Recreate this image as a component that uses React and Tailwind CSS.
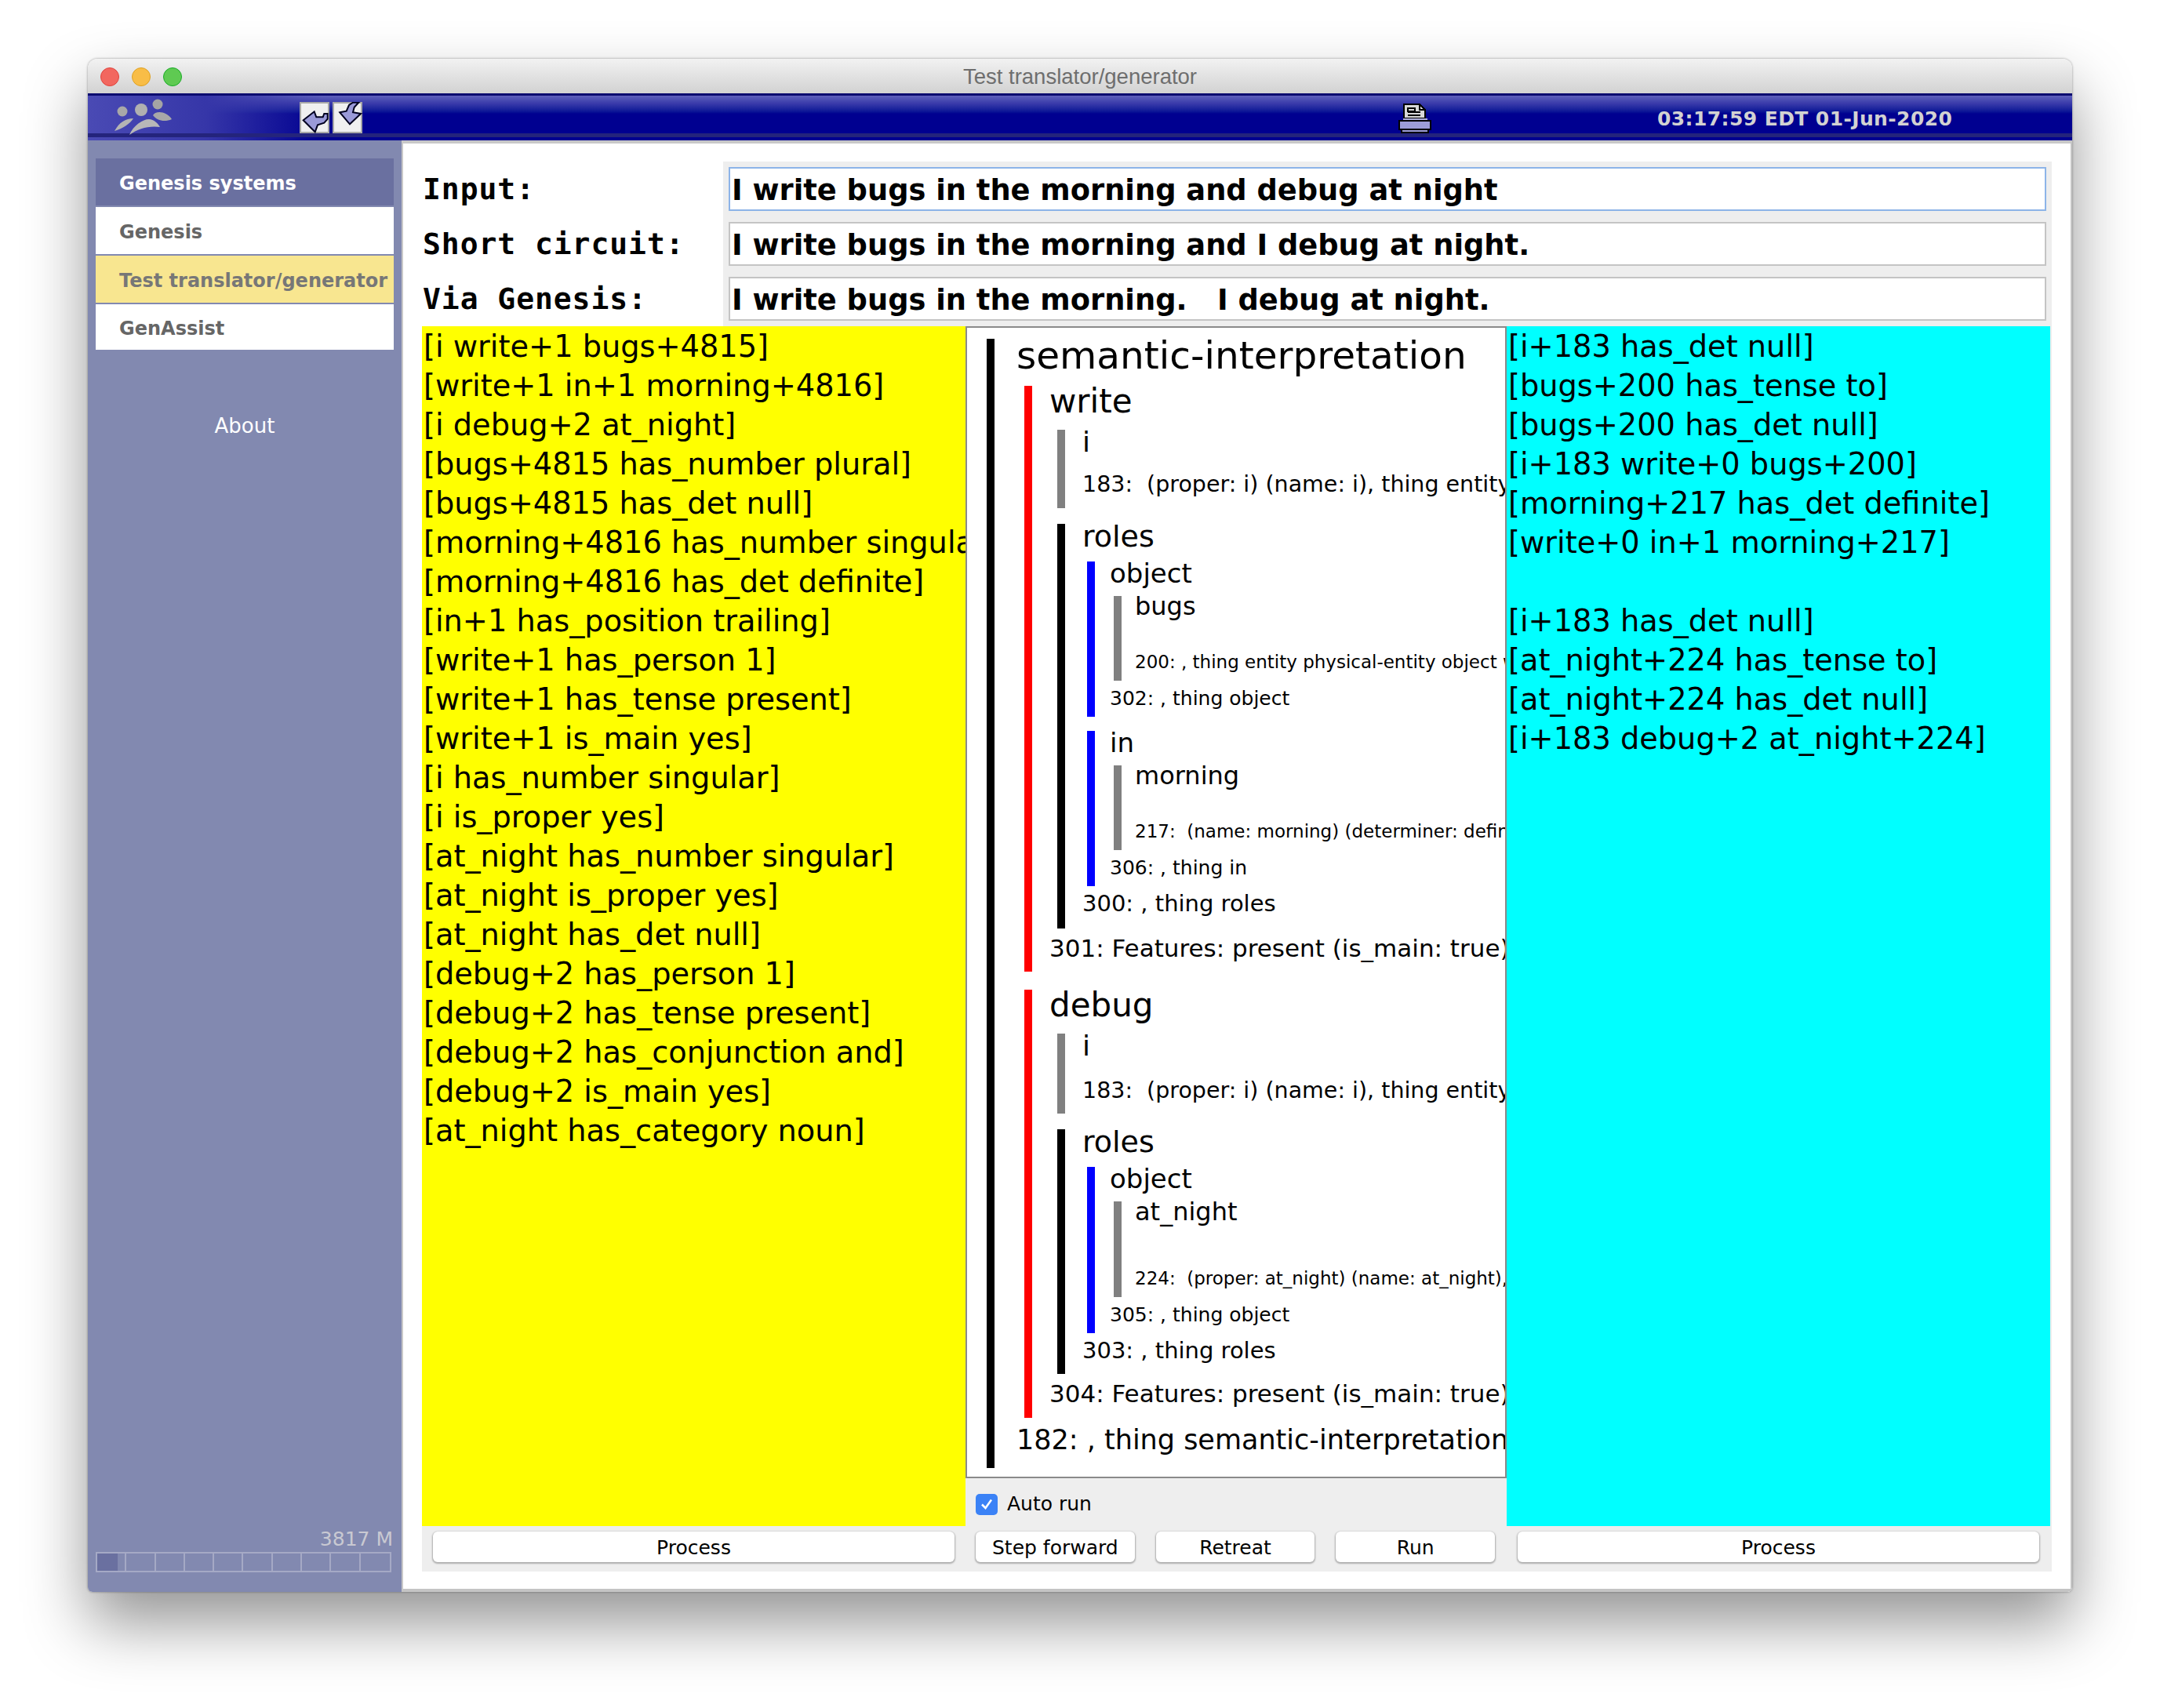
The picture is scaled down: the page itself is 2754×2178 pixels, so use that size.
const YELLOW_LINES = [
    '[i write+1 bugs+4815]',
    '[write+1 in+1 morning+4816]',
    '[i debug+2 at_night]',
    '[bugs+4815 has_number plural]',
    '[bugs+4815 has_det null]',
    '[morning+4816 has_number singular]',
    '[morning+4816 has_det definite]',
    '[in+1 has_position trailing]',
    '[write+1 has_person 1]',
    '[write+1 has_tense present]',
    '[write+1 is_main yes]',
    '[i has_number singular]',
    '[i is_proper yes]',
    '[at_night has_number singular]',
    '[at_night is_proper yes]',
    '[at_night has_det null]',
    '[debug+2 has_person 1]',
    '[debug+2 has_tense present]',
    '[debug+2 has_conjunction and]',
    '[debug+2 is_main yes]',
    '[at_night has_category noun]',
];

const CYAN_LINES = [
    '[i+183 has_det null]',
    '[bugs+200 has_tense to]',
    '[bugs+200 has_det null]',
    '[i+183 write+0 bugs+200]',
    '[morning+217 has_det definite]',
    '[write+0 in+1 morning+217]',
    '',
    '[i+183 has_det null]',
    '[at_night+224 has_tense to]',
    '[at_night+224 has_det null]',
    '[i+183 debug+2 at_night+224]',
];

function Bar({ color, className = '', children }) {
    return (
        <div className={`flex min-w-0 ${className}`}>
            <div className={`w-[10px] shrink-0 ${color}`} />
            <div className="min-w-0 flex-1 overflow-hidden">{children}</div>
        </div>
    );
}

function Line({ className = '', children }) {
    return <div className={`whitespace-nowrap ${className}`}>{children}</div>;
}

function Leaf({ title, detail, height }) {
    return (
        <Bar color="bg-[#808080]" className={`ml-[5px] ${height}`}>
            <div className="pl-[17px]">
                <Line className="h-[28px] text-[32px] leading-[26px]">{title}</Line>
                {detail}
            </div>
        </Bar>
    );
}

function Role({ title, children, footer, className = '' }) {
    return (
        <Bar color="bg-[#0000ff]" className={`ml-[6px] ${className}`}>
            <div className="pl-[19px]">
                <Line className="h-[44px] text-[34px] leading-[30px]">{title}</Line>
                {children}
                {footer}
            </div>
        </Bar>
    );
}

function Event({ title, className = '', grey, detailGap, children, rolesHeight, rolesFooter, footer }) {
    return (
        <Bar color="bg-[#ff0000]" className={`ml-[10px] ${className}`}>
            <div className="pl-[22px]">
                <Line className="h-[56px] text-[42px] leading-[40px]">{title}</Line>
                <Bar color="bg-[#808080]" className={`ml-[10px] ${grey}`}>
                    <div className="pl-[22px]">
                        <Line className="h-[32px] text-[36px] leading-[32px]">i</Line>
                        <Line className={`${detailGap} text-[28.5px] leading-[40px]`}>183:&nbsp; (proper: i) (name: i), thing entity physical-entity</Line>
                    </div>
                </Bar>
                <Bar color="bg-black" className={`ml-[10px] mt-[20px] ${rolesHeight}`}>
                    <div className="pl-[22px]">
                        <Line className="h-[48px] text-[38px] leading-[32px]">roles</Line>
                        {children}
                        <Line className="mt-[2px] text-[29px] leading-[40px]">{rolesFooter}</Line>
                    </div>
                </Bar>
                <Line className="mt-[4px] text-[31px] leading-[42px]">{footer}</Line>
            </div>
        </Bar>
    );
}

function Tree() {
    return (
        <div className="h-[1469px] overflow-hidden border-2 border-[#8a8a8a] bg-white pl-[25px] pt-[14px] text-black [font-family:'DejaVu_Sans',sans-serif]">
            <Bar color="bg-black" className="h-[1440px]">
                <div className="pl-[28px]">
                    <Line className="h-[60px] text-[48.5px] leading-[42px]">semantic-interpretation</Line>
                    <Event
                        title="write"
                        className="h-[747px]"
                        grey="h-[100px]"
                        detailGap="mt-[18px]"
                        rolesHeight="h-[516px]"
                        rolesFooter="300: , thing roles"
                        footer="301: Features: present (is_main: true)"
                    >
                        <Role title="object" className="h-[198px]" footer={<Line className="text-[25px] leading-[46px]">302: , thing object</Line>}>
                            <Leaf
                                title="bugs"
                                height="h-[108px]"
                                detail={<Line className="mt-[36px] text-[23px] leading-[40px]">200: , thing entity physical-entity object whole</Line>}
                            />
                        </Role>
                        <Role title="in" className="mt-[18px] h-[198px]" footer={<Line className="text-[25px] leading-[46px]">306: , thing in</Line>}>
                            <Leaf
                                title="morning"
                                height="h-[108px]"
                                detail={<Line className="mt-[36px] text-[23px] leading-[40px]">217:&nbsp; (name: morning) (determiner: definite), thing</Line>}
                            />
                        </Role>
                    </Event>
                    <Event
                        title="debug"
                        className="mt-[23px] h-[546px]"
                        grey="h-[102px]"
                        detailGap="mt-[21px]"
                        rolesHeight="h-[312px]"
                        rolesFooter="303: , thing roles"
                        footer="304: Features: present (is_main: true)"
                    >
                        <Role title="object" className="h-[212px]" footer={<Line className="text-[25px] leading-[46px]">305: , thing object</Line>}>
                            <Leaf
                                title="at_night"
                                height="h-[122px]"
                                detail={<Line className="mt-[50px] text-[23px] leading-[40px]">224:&nbsp; (proper: at_night) (name: at_night), thing</Line>}
                            />
                        </Role>
                    </Event>
                    <Line className="mt-[6px] text-[35px] leading-[44px]">182: , thing semantic-interpretation</Line>
                </div>
            </Bar>
        </div>
    );
}

function TextLines({ lines, color }) {
    return (
        <div className={`overflow-hidden pl-[2px] pt-[1px] text-[38.3px] leading-[50px] text-black ${color} [font-family:'DejaVu_Sans',sans-serif]`}>
            {lines.map((line, i) => (
                <div key={i} className="h-[50px] whitespace-nowrap">{line}</div>
            ))}
        </div>
    );
}

function ActionButton({ children, className = '' }) {
    return (
        <button className={`flex h-[39px] items-center justify-center rounded-[6px] bg-white pt-[2px] text-[25px] text-black shadow-[0_1px_2px_1px_rgba(0,0,0,0.28)] [font-family:'DejaVu_Sans',sans-serif] ${className}`}>
            {children}
        </button>
    );
}

function FormRow({ focused, children }) {
    return (
        <div className={`flex h-[56px] items-center border-2 bg-white pl-[2px] pt-[4px] text-[36.8px] font-bold text-black [font-family:'DejaVu_Sans',sans-serif] ${focused ? 'border-[#8db4e8]' : 'border-[#c4c4c4]'}`}>
            {children}
        </div>
    );
}

function LogoIcon() {
    return (
        <svg width="76" height="50" viewBox="0 0 76 50" className="absolute left-[34px] top-[7px]">
            <circle cx="10" cy="16" r="6.5" fill="#a8a8a8" />
            <circle cx="34" cy="14" r="8" fill="#b0b0b0" />
            <circle cx="55" cy="7" r="6.5" fill="#a4a4a4" />
            <path d="M0 41 C6 30 14 25 24 25 C20 32 10 38 0 41Z" fill="#b4b4b4" />
            <path d="M19 46 C24 34 36 26 44 26 C50 26 56 32 58 36 C44 34 30 38 19 46Z" fill="#b8b8b8" />
            <path d="M49 21 C52 15 66 15 73 26 C64 30 54 28 49 21Z" fill="#a8a8a8" />
        </svg>
    );
}

function BackIcon() {
    return (
        <svg width="38" height="40" viewBox="0 0 38 40" className="absolute -left-[2px] -top-[2px]">
            <path d="M4.7 23.3 L18.7 12.3 L21.3 19.3 L29.7 19.3 L31.3 15 L35.7 15 L35.7 21.7 L31.3 26.7 L23 29.3 L19.7 38.3 Z" fill="#9a9ad8" stroke="#000020" strokeWidth="2" />
        </svg>
    );
}

function ForwardIcon() {
    return (
        <svg width="38" height="40" viewBox="0 0 38 40" className="absolute -left-[2px] -top-[2px]">
            <path d="M9.3 13.3 L17.7 11.7 L21 4 L26 0.7 L33.3 0.7 L27.7 6.7 L26 13.3 L36 15 L22 28.3 Z" fill="#9a9ad8" stroke="#000020" strokeWidth="2" />
        </svg>
    );
}

function PrinterIcon() {
    return (
        <svg width="42" height="38" viewBox="0 0 42 38" className="absolute left-[1671px] top-[13px]" shapeRendering="crispEdges">
            <path d="M7 1 H27 L34 8 V19 H7 Z" fill="#d8d8d8" stroke="#000" strokeWidth="2" />
            <path d="M12 6 H21 V10 H12 Z M12 11 H28 M12 15 H28 M27 2 V8 H33" fill="none" stroke="#000" strokeWidth="2" />
            <path d="M6 19 H37 V22 H6 Z" fill="#b0b0dc" />
            <path d="M1 22 H41 V33 H1 Z" fill="#9d9dd8" stroke="#000" strokeWidth="2" />
            <path d="M4 33 H38 V37 H4 Z" fill="#9d9dd8" stroke="#000" strokeWidth="2" />
        </svg>
    );
}

function MenuItem({ className, children }) {
    return (
        <div className={`flex items-center whitespace-nowrap pl-[30px] pt-[3px] text-[24px] font-bold [font-family:'DejaVu_Sans',sans-serif] ${className}`}>
            {children}
        </div>
    );
}

export default function App() {
    return (
        <div className="h-[2178px] w-[2754px] overflow-hidden bg-white pl-[112px] pt-[75px]">
            <div className="flex h-[1955px] w-[2530px] flex-col overflow-hidden rounded-b-[6px] rounded-t-[12px] shadow-[0_40px_80px_rgba(0,0,0,0.42),0_0_3px_rgba(0,0,0,0.4)]">
                {/* title bar */}
                <div className="relative flex h-[44px] shrink-0 items-center justify-center bg-gradient-to-b from-[#f2f2f2] to-[#d2d2d2] pt-[2px] text-[27.5px] text-[#6e6e6e] [font-family:'Liberation_Sans',sans-serif]">
                    <div className="absolute left-[16px] top-[11px] flex gap-[16px]">
                        <span className="h-[24px] w-[24px] rounded-full border border-[#e0443e] bg-[#f2675f]" />
                        <span className="h-[24px] w-[24px] rounded-full border border-[#dea123] bg-[#f8bd47]" />
                        <span className="h-[24px] w-[24px] rounded-full border border-[#1aab29] bg-[#5fca52]" />
                    </div>
                    Test translator/generator
                </div>

                {/* tool bar */}
                <div className="relative h-[60px] shrink-0 bg-[#000090]">
                    <div className="absolute inset-x-0 top-0 h-[26px] bg-gradient-to-b from-[#6a6ac0] via-[#3a3aaa] to-[#000090]" />
                    <div className="absolute inset-y-0 left-0 w-[300px] bg-gradient-to-r from-[#4a4ab4] via-[#3636a8] to-transparent" />
                    <div className="absolute inset-x-0 top-0 h-[3px] bg-[#0c0c70]" />
                    <div className="absolute inset-x-0 bottom-[4px] h-[5px] bg-[#24247c]" />
                    <LogoIcon />
                    <div className="absolute left-[270px] top-[11px] flex gap-[4px]">
                        <div className="relative h-[40px] w-[38px] border-2 border-[#a8a8a8] bg-[#f0f0f0]"><BackIcon /></div>
                        <div className="relative h-[40px] w-[38px] border-2 border-[#a8a8a8] bg-[#f0f0f0]"><ForwardIcon /></div>
                    </div>
                    <PrinterIcon />
                    <div className="absolute left-[2001px] top-[15px] whitespace-nowrap text-[25px] font-bold leading-[36px] tracking-[0.4px] text-[#d2d2d2] [font-family:'DejaVu_Sans',sans-serif]">
                        03:17:59 EDT 01-Jun-2020
                    </div>
                </div>

                <div className="flex min-h-0 flex-1">
                    {/* left menu */}
                    <div className="flex w-[400px] shrink-0 flex-col bg-[#8289b0] pb-[25px] pl-[10px] pr-[10px] pt-[23px]">
                        <div className="flex flex-col gap-[2px]">
                            <MenuItem className="h-[60px] bg-[#6a70a0] text-white">Genesis systems</MenuItem>
                            <MenuItem className="h-[60px] bg-white text-[#666666]">Genesis</MenuItem>
                            <MenuItem className="h-[60px] bg-[#f8e690] text-[#777777]">Test translator/generator</MenuItem>
                            <MenuItem className="h-[58px] bg-white text-[#666666]">GenAssist</MenuItem>
                        </div>
                        <div className="mt-[78px] text-center text-[26px] text-white [font-family:'DejaVu_Sans',sans-serif]">About</div>
                        <div className="mt-auto pr-[1px] text-right text-[25px] leading-[30px] text-[#c9c9d2] [font-family:'DejaVu_Sans',sans-serif]">3817 M</div>
                        <div className="mt-[1px] grid h-[26px] w-[377px] grid-cols-10 border-2 border-[#a5a9c5]">
                            {Array.from({ length: 10 }).map((_, i) => (
                                <div key={i} className="border-r-2 border-[#a5a9c5] last:border-r-0">
                                    {i === 0 && <div className="h-full w-[26px] bg-[#6a70a0]" />}
                                </div>
                            ))}
                        </div>
                    </div>

                    {/* main */}
                    <div className="min-w-0 flex-1 border-b-4 border-l-2 border-r-2 border-t-4 border-b-[#c4c4c4] border-l-[#c8c8c8] border-r-[#c4c4c4] border-t-[#c8c8c8] bg-white pl-[24px] pr-[24px] pt-[23px]">
                        <div className="flex">
                            <div className="flex w-[384px] shrink-0 flex-col gap-[14px] pt-[7px] text-[38px] font-bold tracking-[0.95px] text-black [font-family:'DejaVu_Sans_Mono',monospace]">
                                <div className="flex h-[56px] items-center pl-[1px]">Input:</div>
                                <div className="flex h-[56px] items-center pl-[1px]">Short circuit:</div>
                                <div className="flex h-[56px] items-center pl-[1px]">Via Genesis:</div>
                            </div>
                            <div className="flex h-[210px] flex-1 flex-col gap-[14px] bg-[#eeeeee] px-[7px] pt-[7px]">
                                <FormRow focused>I write bugs in the morning and debug at night</FormRow>
                                <FormRow>I write bugs in the morning and I debug at night.</FormRow>
                                <FormRow>I write bugs in the morning.&nbsp;&nbsp; I debug at night.</FormRow>
                            </div>
                        </div>
                        <div className="grid grid-cols-[693px_690px_693px] bg-[#eeeeee]">
                            <TextLines lines={YELLOW_LINES} color="h-[1530px] bg-[#ffff00]" />
                            <div className="h-[1530px]">
                                <Tree />
                                <label className="flex h-[61px] items-center gap-[12px] pl-[13px] pt-[5px] text-[25px] text-black [font-family:'DejaVu_Sans',sans-serif]">
                                    <span className="flex h-[27px] w-[28px] items-center justify-center rounded-[5px] bg-[#3b82f6]">
                                        <svg width="18" height="18" viewBox="0 0 18 18"><path d="M3 9.5 L7.5 14 L15 3.5" fill="none" stroke="white" strokeWidth="2.5" /></svg>
                                    </span>
                                    Auto run
                                </label>
                            </div>
                            <TextLines lines={CYAN_LINES} color="h-[1530px] bg-[#00ffff]" />
                            <div className="flex h-[58px] items-start pl-[14px] pr-[14px] pt-[7px]">
                                <ActionButton className="w-full">Process</ActionButton>
                            </div>
                            <div className="flex h-[58px] items-start gap-[27px] pl-[13px] pr-[15px] pt-[7px]">
                                <ActionButton className="w-[203px]">Step forward</ActionButton>
                                <ActionButton className="w-[203px]">Retreat</ActionButton>
                                <ActionButton className="w-[203px]">Run</ActionButton>
                            </div>
                            <div className="flex h-[58px] items-start pl-[14px] pr-[14px] pt-[7px]">
                                <ActionButton className="w-full">Process</ActionButton>
                            </div>
                        </div>
                    </div>
                </div>
            </div>
        </div>
    );
}
